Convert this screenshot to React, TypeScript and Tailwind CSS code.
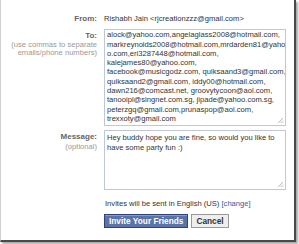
import React from 'react';

const toLines = [
  'alock@yahoo.com,angelaglass2008@hotmail.com,',
  'markreynolds2008@hotmail.com,mrdarden81@yaho',
  'o.com,eri3287448@hotmail.com,',
  'kalejames80@yahoo.com,',
  'facebook@musicgodz.com, quiksaand3@gmail.com,',
  'quiksaand2@gmail.com, iddy00@hotmail.com,',
  'dawn216@comcast.net, groovytycoon@aol.com,',
  'tanooipl@singnet.com.sg, jipade@yahoo.com.sg,',
  'peterzgq@gmail.com,prunaspop@aol.com,',
  'trexxoty@gmail.com',
];

function Grip() {
  return (
    <svg className="absolute right-[1px] bottom-[1px]" width="7" height="7" viewBox="0 0 7 7">
      <path d="M6 1L1 6M6 3.5L3.5 6M6 5.5L5.5 6" stroke="#aaa" strokeWidth="0.8" />
    </svg>
  );
}

export default function App() {
  return (
    <div
      className="w-[299px] h-[244px] bg-white overflow-hidden"
      style={{ fontFamily: '"Liberation Sans", Arial, sans-serif' }}
    >
      <div className="w-[296px] h-[242px] bg-white border-l border-l-[#d0d0d0] border-r-2 border-b-2 border-r-[#4a4a4a] border-b-[#4a4a4a] shadow-[2px_2px_2px_rgba(0,0,0,0.35)]">
        <div className="grid grid-cols-[96px_182px] gap-x-[7px] pt-[14px] text-[7.6px] leading-[9.3px] text-[#333]">
          {/* From */}
          <div className="text-right font-bold text-[8px] text-[#666]">From:</div>
          <div className="text-[#333]">Rishabh Jain &lt;rjcreationzzz@gmail.com&gt;</div>

          {/* To */}
          <div className="text-right mt-[7px]">
            <div className="font-bold text-[8px] text-[#666] pt-[1px]">To:</div>
            <div className="text-[#999] leading-[8.5px]">(use commas to separate</div>
            <div className="text-[#999] leading-[8.5px]">emails/phone numbers)</div>
          </div>
          <div className="relative mt-[6px] h-[97px] border border-[#bdc7d8] px-[2px] whitespace-nowrap overflow-hidden">
            {toLines.map((l) => (
              <div key={l}>{l}</div>
            ))}
            <Grip />
          </div>

          {/* Message */}
          <div className="text-right mt-[4px]">
            <div className="font-bold text-[8px] text-[#666] pt-[2px]">Message:</div>
            <div className="text-[#999]">(optional)</div>
          </div>
          <div className="relative mt-[4px] h-[60px] border border-[#bdc7d8] px-[2px] pt-[2px]">
            <div>Hey buddy hope you are fine, so would you like to</div>
            <div>have some party fun :)</div>
            <Grip />
          </div>

          <div />
          <div className="mt-[9px] pl-[1px]">
            Invites will be sent in English (US) <span className="text-[#3b5998]">[change]</span>
          </div>

          <div />
          <div className="mt-[5px] flex gap-[3px]">
            <button className="h-[14px] px-[4px] bg-[#5b74a8] border border-[#29447e] text-white font-bold text-[8.3px] leading-[12px] shadow-[inset_0_1px_0_#8a9cc2]">
              Invite Your Friends
            </button>
            <button className="h-[14px] px-[4px] bg-[#eeeeee] border border-[#999] text-[#333] font-bold text-[8.3px] leading-[12px]">
              Cancel
            </button>
          </div>
        </div>
      </div>
    </div>
  );
}
